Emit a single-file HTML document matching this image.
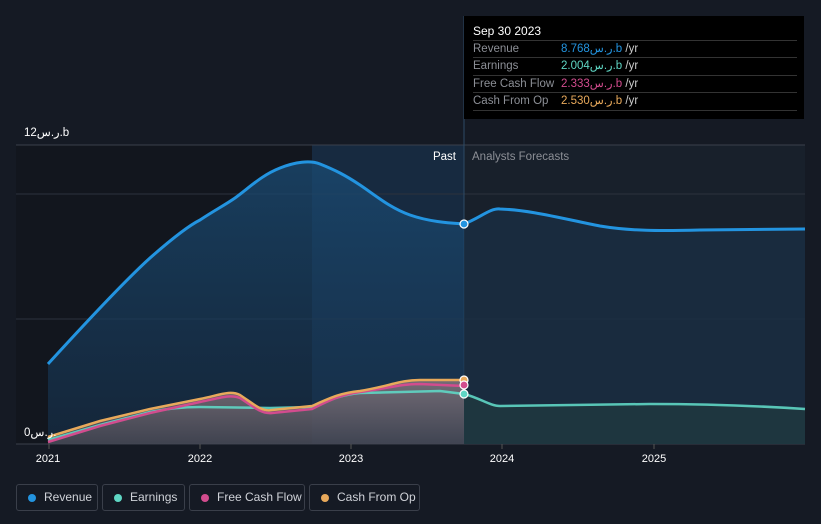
<!DOCTYPE html>
<html><head><meta charset="utf-8"><style>
body{margin:0;background:#151a24;width:821px;height:524px;overflow:hidden;font-family:"Liberation Sans","Noto Sans CJK SC",sans-serif;}
.tt{position:absolute;left:464px;top:16px;width:340px;height:103px;background:#000;color:#fff;font-size:11.5px;}
.tt .h{position:absolute;left:9px;top:8px;font-size:12px}
.row{position:absolute;left:9px;width:324px;border-top:1px solid #333;height:17px;line-height:17px;color:#8c8f96;white-space:nowrap}
.row span{position:absolute;left:88px}
.row i{font-style:normal;color:#ccc}
.lg{position:absolute;top:484px;height:27px;border:1px solid #3a3f4a;border-radius:3px;color:#cfd2d8;font-size:12px;line-height:25px;box-sizing:border-box;white-space:nowrap}
.lg b{position:absolute;left:11px;top:9px;width:8px;height:8px;border-radius:50%}
.lg span{position:absolute;left:27px}
</style></head><body>
<svg width="821" height="524" style="position:absolute;left:0;top:0">
<defs>
<linearGradient id="rg" x1="0" y1="0" x2="0" y2="1"><stop offset="0" stop-color="#1a4a72" stop-opacity="0.9"/><stop offset="1" stop-color="#16314c" stop-opacity="0.7"/></linearGradient>
<linearGradient id="eg" x1="0" y1="0" x2="0" y2="1"><stop offset="0" stop-color="#8a7a80"/><stop offset="1" stop-color="#4a4a55"/></linearGradient>
</defs>
<rect x="16" y="145" width="296" height="299" fill="#12161e"/>
<rect x="312" y="145" width="152" height="299" fill="#172a40"/>
<rect x="464" y="145" width="341" height="299" fill="#18202b"/>
<line x1="16" y1="145" x2="805" y2="145" stroke="#3a404b"/>
<line x1="16" y1="194" x2="805" y2="194" stroke="#2c323d"/>
<line x1="16" y1="319" x2="805" y2="319" stroke="#2c323d"/>
<line x1="16" y1="444" x2="805" y2="444" stroke="#3a404b"/>
<line x1="464" y1="16" x2="464" y2="444" stroke="#2d4a66"/>
<path d="M48,364 C70,340 120,285 150,258 C175,236 190,225 200,220 C215,210 225,205 235,198 C250,187 262,175 280,168 C295,162 310,160 320,164 C335,170 345,175 360,185 C375,195 390,208 410,215 C430,222 450,223 464,224 L464,444 L48,444Z" fill="url(#rg)" opacity="0.85"/>
<path d="M464,224 C480,218 490,208 500,209 C530,210 560,218 600,226 C630,231 660,231 700,230 L805,229 L805,444 L464,444Z" fill="#1a2e44" opacity="0.8"/>
<path d="M48,437 L100,421 L150,409 L200,399 C220,395 230,390 240,395 C255,405 262,412 272,410 L312,406 C330,398 340,393 360,391 C390,386 400,380 420,380 L464,380 L464,444 L48,444Z" fill="url(#eg)" opacity="0.8"/>
<path d="M464,394 C480,398 490,406 500,406 L650,404 C700,404 760,406 805,409 L805,444 L464,444Z" fill="#1f3a40" opacity="0.8"/>
<path d="M48,364 C70,340 120,285 150,258 C175,236 190,225 200,220 C215,210 225,205 235,198 C250,187 262,175 280,168 C295,162 310,160 320,164 C335,170 345,175 360,185 C375,195 390,208 410,215 C430,222 450,223 464,224 C480,218 490,208 500,209 C530,210 560,218 600,226 C630,231 660,231 700,230 L805,229" fill="none" stroke="#2394e0" stroke-width="3"/>
<path d="M48,440 L100,425 L150,412 C170,408 185,407 200,407 L270,408 L312,407 C330,400 340,395 360,393 L440,391 L464,394 C480,398 490,406 500,406 L650,404 C700,404 760,406 805,409" fill="none" stroke="#5fd6c4" stroke-width="2.5" opacity="0.9"/>
<path d="M48,442 L100,426 L150,413 L200,402 C220,398 230,394 240,398 C255,408 262,414 272,413 L312,409 C330,400 340,395 360,392 C390,388 400,384 420,384 L464,386" fill="none" stroke="#d24c8e" stroke-width="2.5"/>
<path d="M48,437 L100,421 L150,409 L200,399 C220,395 230,390 240,395 C255,405 262,412 272,410 L312,406 C330,398 340,393 360,391 C390,386 400,380 420,380 L464,380" fill="none" stroke="#e8a95b" stroke-width="2.5"/>
<circle cx="464" cy="224" r="4" fill="#2394e0" stroke="#fff" stroke-width="1.2"/>
<circle cx="464" cy="380" r="4" fill="#e8a95b" stroke="#fff" stroke-width="1.2"/>
<circle cx="464" cy="385" r="4" fill="#d24c8e" stroke="#fff" stroke-width="1.2"/>
<circle cx="464" cy="394" r="4" fill="#5fd6c4" stroke="#fff" stroke-width="1.2"/>
<g stroke="#555" ><line x1="49" y1="444" x2="49" y2="449"/><line x1="200" y1="444" x2="200" y2="449"/><line x1="351" y1="444" x2="351" y2="449"/><line x1="502" y1="444" x2="502" y2="449"/><line x1="654" y1="444" x2="654" y2="449"/></g>
<g fill="#fff" font-size="11" font-family="Liberation Sans, sans-serif" text-anchor="middle"><text x="48" y="462">2021</text><text x="200" y="462">2022</text><text x="351" y="462">2023</text><text x="502" y="462">2024</text><text x="654" y="462">2025</text></g>
<text x="24" y="136" fill="#fff" font-size="11.5">12ر.س.b</text>
<text x="24" y="436" fill="#fff" font-size="11.5">0ر.س.</text>
<text x="456" y="160" fill="#fff" font-size="11.5" text-anchor="end">Past</text>
<text x="472" y="160" fill="#8c8f96" font-size="11.5">Analysts Forecasts</text>
</svg>
<div class="tt"><div class="h">Sep 30 2023</div>
<div class="row" style="top:24px">Revenue<span><i style="color:#2394e0">8.768ر.س.b</i> <i>/yr</i></span></div>
<div class="row" style="top:41px">Earnings<span><i style="color:#5fd6c4">2.004ر.س.b</i> <i>/yr</i></span></div>
<div class="row" style="top:59px">Free Cash Flow<span><i style="color:#d24c8e">2.333ر.س.b</i> <i>/yr</i></span></div>
<div class="row" style="top:76px;border-bottom:1px solid #333">Cash From Op<span><i style="color:#e8a95b">2.530ر.س.b</i> <i>/yr</i></span></div>
</div>
<div class="lg" style="left:16px;width:82px"><b style="background:#2394e0"></b><span>Revenue</span></div>
<div class="lg" style="left:102px;width:83px"><b style="background:#5fd6c4"></b><span>Earnings</span></div>
<div class="lg" style="left:189px;width:116px"><b style="background:#d24c8e"></b><span>Free Cash Flow</span></div>
<div class="lg" style="left:309px;width:111px"><b style="background:#e8a95b"></b><span>Cash From Op</span></div>
</body></html>
